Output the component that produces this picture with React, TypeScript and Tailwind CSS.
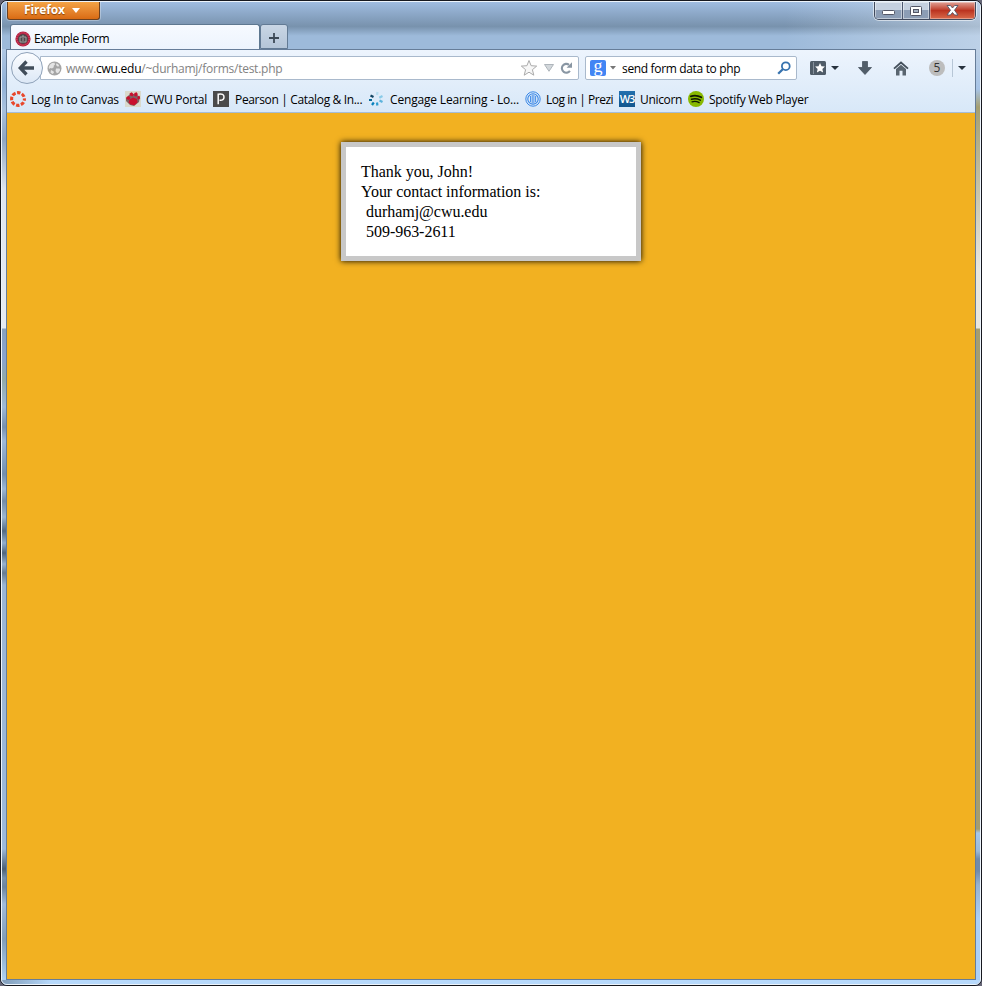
import React from "react";

const ui = "font-['Open_Sans','Noto_Sans',sans-serif]";

function CanvasIcon() {
  return (
    <svg width="16" height="16" viewBox="0 0 16 16">
      <circle cx="8" cy="8" r="6.4" fill="none" stroke="#e8472c" strokeWidth="3.1" strokeDasharray="3.5 1.527" strokeDashoffset="1.75" />
    </svg>
  );
}

function PawIcon() {
  return (
    <svg width="16" height="16" viewBox="0 0 16 16">
      <rect width="16" height="16" fill="#d9d9cc" />
      <path d="M1 7l4-4 6 0 4 3-1 5-5 4-4-1-4-4z" fill="#7d6466" />
      <path d="M4.5 8.5L8 6.5l4 1.5.5 3.5-3 2.8-4-.8-2-2z" fill="#c8102e" />
      <path d="M1.5 6l2.5-1 1.5 2L4 9 1.5 8zM4.5 2.5l2.2-1.3L8.5 3 8 5.3 5.5 5zM9.3 2l2.5-.7 1 2L11.5 5.5 9.3 5zM12.5 5.5l2-.7.7 2.4-1.7 1.6-1.2-1.4z" fill="#c8102e" />
    </svg>
  );
}

function PearsonIcon() {
  return (
    <svg width="16" height="16" viewBox="0 0 16 16">
      <rect width="16" height="16" fill="#4b4b4b" />
      <path d="M5.2 13.2V3.2q5.8-1 5.8 2.7T6.5 9.2" fill="none" stroke="#fff" strokeWidth="1.5" />
    </svg>
  );
}

function CengageIcon() {
  return (
    <svg width="16" height="16" viewBox="0 0 16 16" fill="none" strokeWidth="2.2">
      <path d="M9.5 1L9 4" stroke="#b5ddf0" />
      <path d="M14.5 5l-3.2 1.7" stroke="#8acbe8" />
      <path d="M11.5 9.5l3 1.5" stroke="#5cb3dc" />
      <path d="M9 11.5l.4 3" stroke="#2b9cd0" />
      <path d="M5.8 11.5l-1.8 2.5" stroke="#0781bd" />
      <path d="M1 9h3" stroke="#086b99" />
      <path d="M2.5 4.5l3 1.5" stroke="#124563" />
    </svg>
  );
}

function PreziIcon() {
  return (
    <svg width="16" height="16" viewBox="0 0 16 16" fill="none" stroke="#3987e6">
      <circle cx="8" cy="8" r="7.2" strokeWidth="1" />
      <circle cx="8" cy="8" r="5.2" strokeWidth="1.1" />
      <path d="M5.5 5v6M7.2 3.5v9M8.9 3.5v9M10.6 5v6" strokeWidth="0.9" />
    </svg>
  );
}

function UnicornIcon() {
  return (
    <span className="flex h-4 w-4 items-center justify-center bg-linear-to-b from-[#2370ae] to-[#12568e] font-['Open_Sans',sans-serif] text-[11px] leading-4 font-semibold tracking-[-1.2px] text-white">
      W3
    </span>
  );
}

function SpotifyIcon() {
  return (
    <svg width="16" height="16" viewBox="0 0 16 16">
      <circle cx="8" cy="8" r="8" fill="#87b800" />
      <g fill="none" stroke="#101800" strokeLinecap="round">
        <path d="M2.8 5.3q5.5-1.6 10.5 1" strokeWidth="1.8" />
        <path d="M3.5 8.2q4.6-1.3 8.8.9" strokeWidth="1.5" />
        <path d="M4 10.8q3.8-1 7.2.8" strokeWidth="1.2" />
      </g>
    </svg>
  );
}

const bookmarks = [
  { label: "Log In to Canvas", icon: <CanvasIcon />, size: "w-[115px] gap-[5px]", track: "tracking-[-0.23px]" },
  { label: "CWU Portal", icon: <PawIcon />, size: "w-[88px] gap-[5px]", track: "tracking-[-0.29px]" },
  { label: "Pearson | Catalog & In...", icon: <PearsonIcon />, size: "w-[155px] gap-[6px]", track: "tracking-[-0.34px]" },
  { label: "Cengage Learning - Lo...", icon: <CengageIcon />, size: "w-[157px] gap-[6px]", track: "tracking-[-0.17px]" },
  { label: "Log in | Prezi", icon: <PreziIcon />, size: "w-[94px] gap-[5px]", track: "tracking-[-0.48px]" },
  { label: "Unicorn", icon: <UnicornIcon />, size: "w-[69px] gap-[5px]", track: "tracking-[-0.33px]" },
  { label: "Spotify Web Player", icon: <SpotifyIcon />, size: "w-[126px] gap-[5px]", track: "tracking-[-0.29px]" },
];

function WindowControls() {
  return (
    <div className="mr-[4px] flex h-[18px] w-[102px] overflow-hidden rounded-b-[5px] border border-t-0 border-[#40495c] shadow-[0_0_0_1px_rgba(255,255,255,0.55)]">
      <div className="flex w-7 items-center justify-center border-r border-[#4d5870] bg-linear-to-b from-[#c5d0df] from-45% to-[#8c9db5] to-50% pt-[3px] shadow-[inset_0_0_0_1px_rgba(255,255,255,0.45)]">
        <svg width="13" height="6" viewBox="0 0 13 6"><rect x=".5" y="1.5" width="12" height="4" rx="1" fill="#fff" stroke="#535666" /></svg>
      </div>
      <div className="flex w-[27px] items-center justify-center border-r border-[#4d5870] bg-linear-to-b from-[#c5d0df] from-45% to-[#8c9db5] to-50% shadow-[inset_0_0_0_1px_rgba(255,255,255,0.45)]">
        <svg width="12" height="10" viewBox="0 0 12 10"><rect x=".5" y=".5" width="11" height="9" rx="1" fill="#fff" stroke="#535666" /><rect x="3.5" y="3.5" width="5" height="3" fill="#a2afc0" stroke="#535666" /></svg>
      </div>
      <div className="flex flex-1 items-center justify-center bg-linear-to-b from-[#dfa096] from-0% via-[#bb3320] via-50% to-[#d9694a] shadow-[inset_0_0_0_1px_rgba(255,255,255,0.35)]">
        <svg width="13" height="11" viewBox="0 0 13 11"><path d="M1 .5h3.4L6.5 3 8.6.5H12L8.5 5.2 12 10H8.6L6.5 7.5 4.4 10H1l3.5-4.8z" fill="#fff" stroke="#535666" strokeWidth="0.9" /></svg>
      </div>
    </div>
  );
}

function TitleBar() {
  return (
    <div className="flex h-[47px] shrink-0 flex-col bg-[linear-gradient(to_right,transparent_80%,rgba(220,232,245,0.5)),linear-gradient(to_bottom,#9fbce0,#7892ad_52%,#9dbada_72%)]">
      <div className="flex h-[22px] items-start justify-between">
        <button className={`ml-[5px] flex h-[18px] w-[93px] items-center justify-center gap-[7px] rounded-b-[3px] border border-t-0 border-[#6d4120] bg-linear-to-b from-[#f3a345] to-[#d96b12] pr-[3px] pb-px text-[12px] font-bold tracking-[-0.15px] text-white shadow-[0_0_0_1px_rgba(255,255,255,0.3)] [text-shadow:0_1px_1px_#8a4200] ${ui}`}>
          <span>Firefox</span>
          <svg width="8" height="5" viewBox="0 0 8 5"><path d="M0 0h8L4 5z" fill="#fff" /></svg>
        </button>
        <WindowControls />
      </div>
      <div className="ml-2 flex h-[25px]">
        <div className={`flex h-[25px] w-[250px] items-center rounded-t-[3px] border border-b-0 border-[#5e7890] bg-linear-to-b from-[#f6faff] to-[#edf4fd] pt-[3px] pl-[4px] text-[12px] text-black ${ui}`}>
          <svg width="16" height="16" viewBox="0 0 16 16">
            <circle cx="8" cy="8" r="7.6" fill="#b51e3f" />
            <circle cx="8" cy="8" r="6.2" fill="none" stroke="#d97188" strokeWidth=".8" strokeDasharray="1 1" />
            <circle cx="8" cy="8" r="5" fill="#4d484b" />
            <path d="M5 6h6M5 6v5h6V6M7 5h2M8 7v3" fill="none" stroke="#aaa" strokeWidth=".9" />
          </svg>
          <span className="ml-[3px] tracking-[-0.44px]">Example Form</span>
        </div>
        <div className="flex h-[25px] w-[28px] items-center justify-center rounded-t-[3px] border border-[#627a94] bg-linear-to-b from-[#c9d6e5] to-[#b4c5d8] pt-[2px]">
          <svg width="12" height="12" viewBox="0 0 12 12"><path d="M6 1v10M1 6h10" stroke="#3c4956" strokeWidth="1.8" /></svg>
        </div>
      </div>
    </div>
  );
}

function AddressField() {
  return (
    <div className="-ml-[3px] flex h-6 w-[539px] items-center rounded-r-[2px] border border-[#a9b9cc] bg-white pl-[6px]">
      <svg width="15" height="15" viewBox="0 0 15 15">
        <circle cx="7.5" cy="7.5" r="7" fill="#a5a5a5" />
        <path d="M3 3.5L5 2l2.5-.2L8 3.5 6.5 5 7 6 5 7.5 3.5 7 2 8 1.7 6zM9.5 2.3l2 1.3.8 1.6-1.8.3L9 4zM9 7.5l3.5 0 .7 1.5-1.8 2.7-1.5.5L8.5 10zM4 9l2.5 1.2.5 1.6-1.5 1.2L3.5 11.5z" fill="#e4e4e4" />
      </svg>
      <span className={`ml-[4px] w-[220px] pt-px text-[12px] tracking-[-0.25px] whitespace-nowrap text-[#828282] ${ui}`}>
        www.<span className="text-black">cwu.edu</span>/~durhamj/forms/test.php
      </span>
      <svg className="ml-auto" width="18" height="18" viewBox="0 0 18 18"><path d="M9 1.5l2.1 5.2 5.6.4-4.3 3.6 1.4 5.5L9 13.2l-4.8 3 1.4-5.5L1.3 7.1l5.6-.4z" fill="#f7f7f7" stroke="#aaa" /></svg>
      <svg className="ml-[6px]" width="10" height="8" viewBox="0 0 10 8"><path d="M.5.5h9L5 7.3z" fill="#d2d7db" stroke="#aeb5bb" /></svg>
      <svg className="mr-[5px] ml-[6px]" width="13" height="12" viewBox="0 0 13 12"><path d="M9.9 8.8A4.4 4.4 0 1 1 9 2.8" fill="none" stroke="#8996a3" strokeWidth="2.1" /><path d="M12 .3v5.5H6.6z" fill="#8996a3" /></svg>
    </div>
  );
}

function NavBar() {
  return (
    <div className="flex h-9 items-center pl-[4px]">
      <div className="z-10 flex h-8 w-8 shrink-0 items-center justify-center rounded-full border border-[#8fa2b9] bg-linear-to-b from-[#fcfdff] to-[#dce8f6]">
        <svg width="18" height="16" viewBox="0 0 18 16"><path d="M8.5 1.5L2.2 8l6.3 6.5M2.5 8h13.5" fill="none" stroke="#414d5a" strokeWidth="3.3" /></svg>
      </div>
      <AddressField />
      <div className="ml-[6px] flex h-6 w-[212px] shrink-0 items-center rounded-[2px] border border-[#a9b9cc] bg-white pl-1">
        <span className="flex h-4 w-4 items-center justify-center rounded-[2px] bg-[#4285f4] pb-[4px] font-['Liberation_Serif',serif] text-[18px] leading-none text-white">g</span>
        <svg className="ml-1" width="6" height="4" viewBox="0 0 6 4"><path d="M0 0h6L3 3.5z" fill="#777" /></svg>
        <span className={`ml-[6px] pt-px text-[12px] tracking-[-0.34px] whitespace-nowrap text-black ${ui}`}>send form data to php</span>
        <svg className="mr-[5px] ml-auto" width="14" height="14" viewBox="0 0 14 14" fill="none" stroke="#3672ae"><circle cx="8.8" cy="5.2" r="3.9" strokeWidth="1.8" /><path d="M6 8l-4.8 4.8" strokeWidth="2.3" /></svg>
      </div>
      <svg className="ml-[13px]" width="16" height="14" viewBox="0 0 16 14"><rect width="16" height="14" rx="1.5" fill="#505c68" /><path d="M3.5 1v12" stroke="#87919c" /><path d="M10 2l1.5 3.2 3.4.4-2.5 2.3.7 3.5-3.1-1.7-3.1 1.7.7-3.5-2.5-2.3 3.4-.4z" fill="#fff" /></svg>
      <svg className="ml-[5px]" width="8" height="4" viewBox="0 0 8 4"><path d="M0 0h8L4 4z" fill="#27323e" /></svg>
      <svg className="ml-[19px]" width="14" height="14" viewBox="0 0 14 14"><path d="M4.5.5h5v6h4L7 13.5.5 6.5h4z" fill="#515d69" stroke="#414c57" strokeWidth=".7" /></svg>
      <svg className="ml-[21px]" width="16" height="15" viewBox="0 0 16 15"><path d="M1 7.6L8 1.5l7 6.1" fill="none" stroke="#434f5b" strokeWidth="1.8" /><path d="M3 8l5-4.3L13 8v6.5H9.5V9.8h-3v4.7H3z" fill="#596570" /></svg>
      <span className={`ml-[20px] flex h-4 w-4 shrink-0 items-center justify-center rounded-full bg-[#bdbdbd] text-[12px] leading-4 text-[#333] ${ui}`}>5</span>
      <span className="ml-[7px] h-[18px] w-px bg-[#b7c6d6]" />
      <svg className="ml-[5px]" width="8" height="4" viewBox="0 0 8 4"><path d="M0 0h8L4 4z" fill="#27323e" /></svg>
    </div>
  );
}

export default function App() {
  return (
    <div className="h-[986px] w-[982px] overflow-hidden bg-[#667]">
      <div className="h-full rounded-[7px] border border-[#16181f] bg-[#a1bad8]">
        <div className="flex h-full flex-col overflow-hidden rounded-[6px] border border-[#edf4fb]">
          <TitleBar />
          <div className="flex min-h-0 flex-1">
            <div className="w-1 bg-[linear-gradient(to_bottom,#b0c8e4_0px,#91b1d7_35px,#a8c2df_60px,#8fa6c2_90px,#dee5ef_140px,#e6ebf2_279px,#87a1bf_280px,#89a3d0_310px,#91aaa9_330px,#9fb9d8_358px,#7790ae_378px,#9eb9da_392px,#738eae_425px,#9db7d5_440px,#748ca8_452px,#9cb6d2_468px,#546b84_482px,#93afce_494px,#4f657d_504px,#98b2cf_515px,#667b92_524px,#9bb5d4_536px,#9db9da_800px,#4c6075_820px,#7892ad_829px,#6c849e_838px,#a2bcdb_855px,#819db9_890px,#add0f2_930px)]" />
            <div className="flex w-[970px] flex-col border border-[#667d99]">
              <div className="flex h-[63px] shrink-0 flex-col border-b border-[#a5bdd7] bg-linear-to-b from-[#edf4fd] to-[#d8e8f8]">
                <NavBar />
                <div className={`flex h-[26px] items-center pl-[3px] text-[12px] whitespace-nowrap text-black ${ui}`}>
                  {bookmarks.map((b) => (
                    <div key={b.label} className={`flex shrink-0 items-center ${b.size}`}>
                      <span className="h-4 w-4 shrink-0">{b.icon}</span>
                      <span className={`pt-[2px] ${b.track}`}>{b.label}</span>
                    </div>
                  ))}
                </div>
              </div>
              <main className="flex-1 bg-[#f2b121] pt-[29px]">
                <section className="mx-auto h-[119px] w-[300px] border-[5px] border-[#c8c8c8] bg-white pt-[15px] pl-[15px] font-['Liberation_Serif',serif] text-[16px] leading-5 tracking-[-0.03px] text-black shadow-[0_0_6px_#000]">
                  <p>Thank you, John!</p>
                  <p>Your contact information is:</p>
                  <p className="pl-[5px]">durhamj@cwu.edu</p>
                  <p className="pl-[5px]">509-963-2611</p>
                </section>
              </main>
            </div>
            <div className="w-1 bg-[linear-gradient(to_bottom,#bdd0e5_0px,#a7c4e7_40px,#a59f70_58px,#e9e7df_220px,#e9e7df_279px,#a59d70_280px,#a59d70_780px,#a6c7e9_784px,#9bbad9_802px,#718baa_810px,#718baa_822px,#96b2d0_836px,#abd0f8_870px)]" />
          </div>
          <div className="h-1 shrink-0 bg-linear-to-r from-[#819db9] via-[#b7d9fb] via-5% to-[#b7d9fb]" />
        </div>
      </div>
    </div>
  );
}
